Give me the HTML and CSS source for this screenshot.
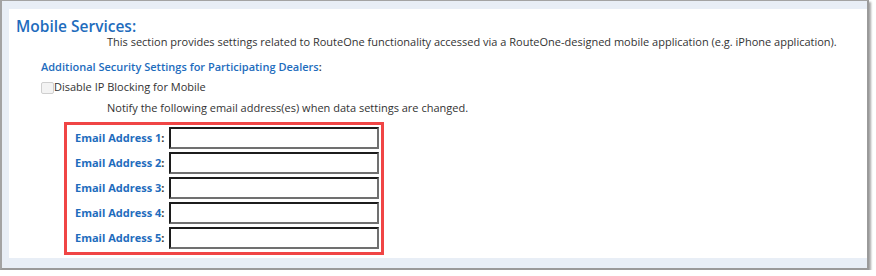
FILE: index.html
```html
<!DOCTYPE html>
<html lang="en">
<head>
    <meta charset="UTF-8">
    <title>Mobile Services</title>
    <link rel="stylesheet" href="styles.css">
</head>
<body>
    <div class="frame">
        <div class="panel">
            <h2 class="title">Mobile Services:</h2>
            <p class="desc">This section provides settings related to RouteOne functionality accessed via a RouteOne-designed mobile application (e.g. iPhone application).</p>

            <div class="subhead"><span class="blue">Additional Security Settings for Participating Dealers</span>:</div>
            <label class="check-row">
                <input type="checkbox" disabled>Disable IP Blocking for Mobile
            </label>
            <p class="desc notify">Notify the following email address(es) when data settings are changed.</p>

            <!-- highlighted email block -->
            <div class="email-box">
                <div class="email-row"><label><span class="blue">Email Address 1</span>:</label><input type="text"></div>
                <div class="email-row"><label><span class="blue">Email Address 2</span>:</label><input type="text"></div>
                <div class="email-row"><label><span class="blue">Email Address 3</span>:</label><input type="text"></div>
                <div class="email-row"><label><span class="blue">Email Address 4</span>:</label><input type="text"></div>
                <div class="email-row"><label><span class="blue">Email Address 5</span>:</label><input type="text"></div>
            </div>
        </div>
    </div>
</body>
</html>
```

FILE: styles.css
```css
body {
    margin: 0;
    padding: 0;
    background-color: #ffffff;
    font-family: "Open Sans", Arial, sans-serif;
    font-size: 11px;
    color: #333333;
}

.frame {
    box-sizing: border-box;
    width: 869px;
    border-top: 1px solid #a3a3a3;
    border-left: 2px solid #a3a3a3;
    border-right: 2px solid #9a9a9a;
    border-bottom: 2px solid #9a9a9a;
    background-color: #e8eef6;
    padding: 8px 0 10px 7px;
    box-shadow: 2px 2px 2px rgba(0, 0, 0, 0.35);
}

.panel {
    background-color: #ffffff;
    padding: 8px 0 3px 0;
}

.blue {
    color: #1e6cbd;
}

.title {
    margin: 0 0 0 7px;
    font-size: 15.5px;
    font-weight: 600;
    line-height: 18px;
    color: #1e6cbd;
}

.desc {
    margin: 0 0 0 98px;
    line-height: 14px;
}

.subhead {
    margin: 10px 0 0 32px;
    line-height: 16px;
    font-weight: 600;
}

.check-row {
    display: flex;
    align-items: center;
    margin: 4px 0 0 32px;
    line-height: 16px;
}

.check-row input {
    appearance: none;
    width: 13px;
    height: 12px;
    margin: 2px 0 0 0;
    border: 1px solid #cfcfcf;
    border-radius: 2px;
    background-color: #f3f3f3;
    box-sizing: border-box;
}

.notify {
    margin-top: 5px;
    line-height: 16px;
}

.email-box {
    width: 320px;
    box-sizing: border-box;
    margin: 6px 0 0 55px;
    border: 3px solid #f04545;
    padding: 2px 2px 3px 8px;
    display: flex;
    flex-direction: column;
    gap: 3px;
}

.email-row {
    display: flex;
    align-items: center;
}

.email-row label {
    flex: 1;
    font-weight: 700;
    line-height: 16px;
}

.email-row input {
    width: 210px;
    height: 22px;
    box-sizing: border-box;
    margin: 0;
    padding: 0 3px;
    border-style: solid;
    border-width: 2px;
    border-color: #1c1c1c #707070 #707070 #1c1c1c;
    background-color: #ffffff;
    font-family: inherit;
}
```
